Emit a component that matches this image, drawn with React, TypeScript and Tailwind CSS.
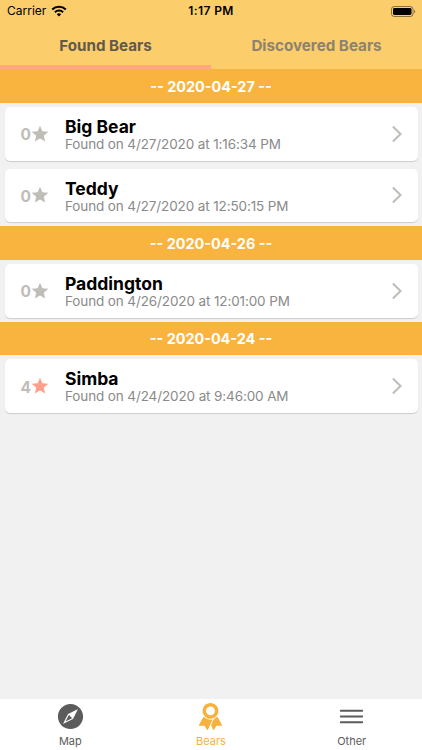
import React from "react";
import { IoIosCompass, IoIosMenu, IoIosRibbon } from "react-icons/io";
import { MdArrowForwardIos, MdStar } from "react-icons/md";

const sections = [
  {
    date: "2020-04-27",
    bears: [
      { name: "Big Bear", found: "4/27/2020 at 1:16:34 PM", stars: 0 },
      { name: "Teddy", found: "4/27/2020 at 12:50:15 PM", stars: 0 },
    ],
  },
  {
    date: "2020-04-26",
    bears: [{ name: "Paddington", found: "4/26/2020 at 12:01:00 PM", stars: 0 }],
  },
  {
    date: "2020-04-24",
    bears: [{ name: "Simba", found: "4/24/2020 at 9:46:00 AM", stars: 4 }],
  },
];

const StatusBar = () => {
  return (
    <div className="grid h-[22px] grid-cols-3 items-center px-[7px] text-[12px] text-black">
      <span className="flex items-center gap-[5px]">
        Carrier
        <svg className="-mt-[1px]" width="16" height="12" viewBox="0 0 16 12" fill="none">
          <path d="M1.2 4.5a9.7 9.7 0 0 1 13.6 0" stroke="#000" strokeWidth="2.1" />
          <path d="M3.9 7.2a5.9 5.9 0 0 1 8.2 0" stroke="#000" strokeWidth="2" />
          <path d="M8 11.4 5.8 9.2a3.2 3.2 0 0 1 4.4 0z" fill="#000" />
        </svg>
      </span>
      <span className="text-center font-semibold tracking-[0.4px]">1:17 PM</span>
      <svg className="-mr-[1px] justify-self-end" width="25" height="11" viewBox="0 0 25 11">
        <rect x="0.5" y="0.5" width="21.5" height="10" rx="2.7" fill="none" stroke="#000" strokeOpacity="0.45" />
        <rect x="2" y="2" width="18.5" height="7" rx="1.4" fill="#000" />
        <path d="M23.2 3.7v3.6c1.4-.6 1.4-3 0-3.6z" fill="#000" fillOpacity="0.5" />
      </svg>
    </div>
  );
};

const BearCard = ({ name, found, stars }: { name: string; found: string; stars: number }) => {
  return (
    <div className="mx-[4.5px] my-1 flex h-[53.75px] items-center rounded-[5px] bg-white pr-[11px] pl-4 shadow-[0_1px_1px_rgba(0,0,0,0.15)]">
      <div className="flex w-[44.5px] items-center text-[15.5px] font-bold text-[#c0bdb8]">
        <span className="w-[9.5px] pt-[2px]">{stars}</span>
        <MdStar className={stars > 0 ? "h-5 w-5 shrink-0 text-[#ffa18a]" : "h-5 w-5 shrink-0 text-[#c0bdb8]"} />
      </div>
      <div className="flex-1 pt-[2.5px]">
        <div className="text-[17.5px] leading-[19px] font-bold text-black">{name}</div>
        <div className="text-[13.5px] leading-[17px] tracking-[-0.12px] text-[#8a8a8a]">Found on {found}</div>
      </div>
      <MdArrowForwardIos className="h-5 w-5 text-[#c0bdb8]" />
    </div>
  );
};

const App = () => {
  return (
    <div className="flex h-screen flex-col overflow-hidden bg-[#f1f1f1] font-['Inter',sans-serif]">
      {/* header */}
      <div className="h-[69.25px] shrink-0 bg-[#fccd6b]">
        <StatusBar />
        <div className="grid h-[47.25px] grid-cols-2 text-center text-[15.2px] leading-[20px] font-bold">
          <div className="border-b-4 border-[#ffa58a] pt-[13.5px] text-[#615a4b]">Found Bears</div>
          <div className="pt-[13.5px] text-[#8d826f]">Discovered Bears</div>
        </div>
      </div>

      {/* list */}
      <div className="flex-1">
        {sections.map((s) => (
          <div className="flow-root" key={s.date}>
            <div className="h-[33.6px] bg-[#f9b440] pt-[0.5px] text-center text-[14.4px] leading-[34px] font-bold text-white">
              -- {s.date} --
            </div>
            {s.bears.map((b) => (
              <div className="flow-root" key={b.name}>
                <BearCard {...b} />
              </div>
            ))}
          </div>
        ))}
      </div>

      {/* bottom tabs */}
      <div className="grid h-[51px] shrink-0 grid-cols-3 bg-white text-[11px] leading-[14px] text-[#5c5c5c]">
        <div className="flex flex-col items-center">
          <IoIosCompass className="mt-[2px] h-[31px] w-[31px]" />
          <span className="mt-[2px]">Map</span>
        </div>
        <div className="flex flex-col items-center text-[#f7b13c]">
          <IoIosRibbon className="mt-[2px] h-[31px] w-[31px]" />
          <span className="mt-[2px]">Bears</span>
        </div>
        <div className="flex flex-col items-center">
          <IoIosMenu className="mt-[2px] h-[31px] w-[31px]" />
          <span className="mt-[2px]">Other</span>
        </div>
      </div>
    </div>
  );
};

export default App;
